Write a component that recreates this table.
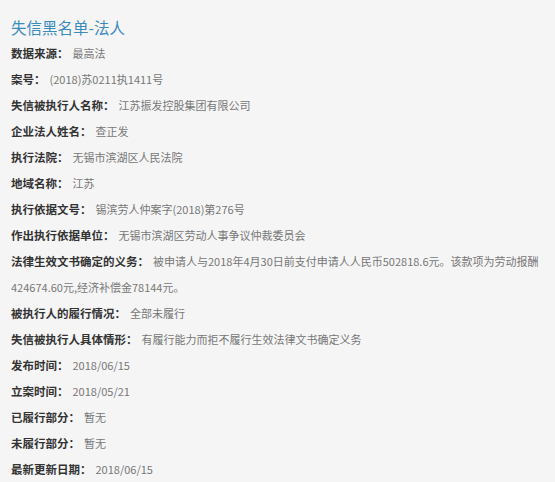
const rows = [
  ["数据来源：", "最高法"],
  ["案号：", "(2018)苏0211执1411号"],
  ["失信被执行人名称：", "江苏振发控股集团有限公司"],
  ["企业法人姓名：", "查正发"],
  ["执行法院：", "无锡市滨湖区人民法院"],
  ["地域名称：", "江苏"],
  ["执行依据文号：", "锡滨劳人仲案字(2018)第276号"],
  ["作出执行依据单位：", "无锡市滨湖区劳动人事争议仲裁委员会"],
  [
    "法律生效文书确定的义务：",
    "被申请人与2018年4月30日前支付申请人人民币502818.6元。该款项为劳动报酬424674.60元,经济补偿金78144元。",
  ],
  ["被执行人的履行情况：", "全部未履行"],
  ["失信被执行人具体情形：", "有履行能力而拒不履行生效法律文书确定义务"],
  ["发布时间：", "2018/06/15"],
  ["立案时间：", "2018/05/21"],
  ["已履行部分：", "暂无"],
  ["未履行部分：", "暂无"],
  ["最新更新日期：", "2018/06/15"],
];

export default function App() {
  return (
    <div
      className="min-h-screen w-[555px] bg-[#f5f5f5] pl-[11px] pr-[12px] pt-[14px]"
      style={{ fontFamily: '"Noto Sans CJK SC", "Noto Sans", sans-serif' }}
    >
      <h1 className="h-[26px] text-[15.5px] leading-[26px] font-normal text-[#3b8bbd]">
        失信黑名单-法人
      </h1>
      {rows.map(([label, value]) => (
        <p key={label} className="text-[11px] leading-[26px] break-all">
          <span className="text-[11.5px] leading-[26px] align-top font-bold text-[#333]">
            {label}
          </span>
          <span className="ml-[4px] text-[11px] leading-[26px] align-top text-[#777]">
            {value}
          </span>
        </p>
      ))}
    </div>
  );
}
